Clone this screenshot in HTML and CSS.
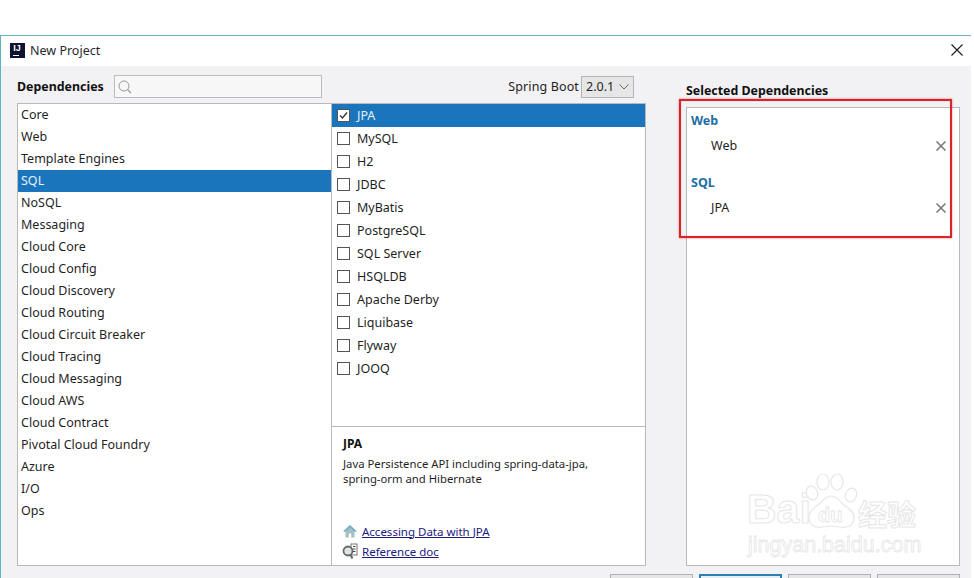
FILE: index.html
```html
<!DOCTYPE html>
<html lang="en">
<head>
<meta charset="utf-8">
<title>New Project</title>
<link rel="stylesheet" href="styles.css">
</head>
<body>
<div class="page">
  <div class="dialog">
    <div class="titlebar">
      <div class="ij"><span class="ij-text">IJ</span><span class="ij-bar"></span></div>
      <span class="title">New Project</span>
      <svg class="close" width="12" height="12" viewBox="0 0 12 12"><path d="M.5.5l11 11M11.500.5l-11 11" stroke="#1a1a1a" stroke-width="1.1" fill="none"/></svg>
    </div>
    <div class="content">
      <div class="main">
        <div class="toolbar">
          <span class="heading">Dependencies</span>
          <div class="search">
            <svg width="16" height="16" viewBox="0 0 16 16"><circle cx="7" cy="7" r="5" fill="none" stroke="#9a9a9a" stroke-width="1"/><path d="M10.500 10.500l3.500 3.500" stroke="#9a9a9a" stroke-width="1.300"/></svg>
          </div>
          <span class="boot-label">Spring Boot</span>
          <div class="combo"><span>2.0.1</span><svg width="10" height="6" viewBox="0 0 10 6"><path d="M.5.5L5 5 9.500.5" fill="none" stroke="#666" stroke-width="1"/></svg></div>
        </div>
        <div class="lists">
          <ul class="categories">
            <li>Core</li><li>Web</li><li>Template Engines</li><li class="selected">SQL</li><li>NoSQL</li><li>Messaging</li><li>Cloud Core</li><li>Cloud Config</li><li>Cloud Discovery</li><li>Cloud Routing</li><li>Cloud Circuit Breaker</li><li>Cloud Tracing</li><li>Cloud Messaging</li><li>Cloud AWS</li><li>Cloud Contract</li><li>Pivotal Cloud Foundry</li><li>Azure</li><li>I/O</li><li>Ops</li>
          </ul>
          <div class="detail">
            <ul class="options">
              <li class="selected"><span class="box"><svg width="11" height="11" viewBox="0 0 11 11"><path d="M2 5.500l2.500 2.500L9 2.500" fill="none" stroke="#333" stroke-width="1.300"/></svg></span>JPA</li>
              <li><span class="box"></span>MySQL</li>
              <li><span class="box"></span>H2</li>
              <li><span class="box"></span>JDBC</li>
              <li><span class="box"></span>MyBatis</li>
              <li><span class="box"></span>PostgreSQL</li>
              <li><span class="box"></span>SQL Server</li>
              <li><span class="box"></span>HSQLDB</li>
              <li><span class="box"></span>Apache Derby</li>
              <li><span class="box"></span>Liquibase</li>
              <li><span class="box"></span>Flyway</li>
              <li><span class="box"></span>JOOQ</li>
            </ul>
            <div class="info">
              <div class="info-title">JPA</div>
              <p class="info-text">Java Persistence API including spring-data-jpa,<br>spring-orm and Hibernate</p>
              <div class="info-links">
                <div class="link-row">
                  <svg class="link-icon" width="15" height="15" viewBox="0 0 15 15"><path d="M7.500 1.500L1 7.500h2v6h3.300V9.500h2.400v4H12v-6h2z" fill="#a9bfc6"/><path d="M7.500 1L.5 7.500h2.600L7.500 3.500l4.400 4h2.600z" fill="#6fb0c6"/></svg>
                  <a class="link">Accessing Data with JPA</a>
                </div>
                <div class="link-row">
                  <svg class="link-icon" width="16" height="16" viewBox="0 0 16 16"><rect x="9" y="1" width="6" height="11" fill="#fff" stroke="#777"/><path d="M11 3.500h2.500M11 6h2.500M11 8.500h2.500" stroke="#444"/><circle cx="6" cy="8" r="4.500" fill="#dfe6e8" stroke="#666" stroke-width="1.800"/><path d="M8.500 12L10.500 15.500" stroke="#666" stroke-width="2"/></svg>
                  <a class="link">Reference doc</a>
                </div>
              </div>
            </div>
          </div>
        </div>
      </div>
      <div class="side">
        <div class="heading side-heading">Selected Dependencies</div>
        <div class="panel">
          <div class="group">Web</div>
          <div class="item"><span>Web</span><svg width="10" height="10" viewBox="0 0 10 10"><path d="M.5.500l9 9M9.500.500l-9 9" stroke="#777" stroke-width="1.500"/></svg></div>
          <div class="group group-next">SQL</div>
          <div class="item"><span>JPA</span><svg width="10" height="10" viewBox="0 0 10 10"><path d="M.5.500l9 9M9.500.500l-9 9" stroke="#777" stroke-width="1.500"/></svg></div>
        </div>
      </div>
    </div>
    <div class="footer">
      <span class="btn"></span><span class="btn btn-default"></span><span class="btn"></span><span class="btn"></span>
    </div>
  </div>
  <div class="callout"></div>
  <div class="watermark">
    <span class="wm-bai">Bai</span>
    <span class="wm-paw">
      <svg width="52" height="56" viewBox="0 0 52 56"><g fill="#fff" stroke="#e6e6e6" stroke-width="1.200"><ellipse cx="17" cy="9" rx="6" ry="8"/><ellipse cx="31" cy="9" rx="6" ry="8"/><ellipse cx="6" cy="20" rx="5.500" ry="7" transform="rotate(-20 6 20)"/><ellipse cx="45" cy="22" rx="5.500" ry="7" transform="rotate(20 45 22)"/><path d="M25 23c-6 0-8 5-13 9-5 4-10 7-9 14 1 7 7 9 13 8 6-1 12-1 18 0 7 1 13-1 14-8 1-7-5-11-10-14-5-4-7-9-13-9z"/></g></svg>
      <span class="wm-du">du</span>
    </span>
    <span class="wm-cn">经验</span>
    <span class="wm-url">jingyan.baidu.com</span>
  </div>
</div>
</body>
</html>
```
FILE: styles.css
```css
* { box-sizing: border-box; }
html, body { margin: 0; padding: 0; background: #fff; }
body { font-family: "Noto Sans", "Open Sans", sans-serif; font-size: 13px; color: #1f1f1f; }
ul { list-style: none; margin: 0; padding: 0; }
p { margin: 0; }

.page { position: relative; width: 974px; height: 578px; overflow: hidden; padding-top: 35px; }
.dialog { width: 971px; height: 600px; border-top: 1px solid #6fb2c2; border-left: 1px solid #58b7c3; background: #f2f1f3; }

.titlebar { height: 30px; background: #fff; display: flex; align-items: center; padding: 0 8px 2px 9px; }
.ij { width: 15px; height: 15px; background: #0b1430; display: flex; flex-direction: column; align-items: center; margin-right: 5px; }
.ij-text { font: bold 9px/9px "Liberation Sans", sans-serif; color: #fff; margin-top: 1px; margin-right: 1px; }
.ij-bar { width: 6px; height: 1px; background: #fff; margin-top: 2px; margin-right: 3px; }
.title { font-size: 12.500px; color: #2a2a2a; flex: 1; }

.content { display: flex; padding-left: 16px; gap: 40px; }
.main { width: 629px; }
.toolbar { height: 37px; display: flex; align-items: center; padding-top: 4px; }
.heading { font-weight: 700; font-size: 12.400px; color: #111; }
.search { width: 208px; height: 23px; margin-left: 10px; border: 1px solid #bcbcbc; background: #f7f7f8; display: flex; align-items: center; padding-left: 2px; }
.boot-label { margin-left: auto; margin-right: 2px; font-size: 12.500px; letter-spacing: .01em; }
.combo { width: 53px; height: 22px; margin-right: 12px; border: 1px solid #b4b4b4; background: #e6e6e6; display: flex; align-items: center; justify-content: space-between; padding: 0 4px; font-size: 12.500px; }

.lists { display: flex; height: 463px; border: 1px solid #b9b9b9; background: #fff; }
.categories { width: 314px; border-right: 1px solid #b9b9b9; flex: none; }
.categories li { height: 22px; line-height: 22px; padding-left: 3px; font-size: 12.500px; }
.selected { background: #1b75bc; color: #e6f0f8; }
.detail { flex: 1; display: flex; flex-direction: column; min-width: 0; }
.options { height: 323px; border-bottom: 1px solid #b9b9b9; }
.options li { height: 23px; display: flex; align-items: center; padding-left: 5px; font-size: 12.500px; }
.box { width: 13px; height: 13px; border: 1px solid #555; background: #fff; margin-right: 7px; display: flex; align-items: center; justify-content: center; }
.info { flex: 1; display: flex; flex-direction: column; padding: 9px 10px 4px 11px; }
.info-title { font-weight: 700; font-size: 12px; line-height: 16px; color: #111; }
.info-text { font-size: 11.300px; line-height: 14.600px; margin-top: 5px; }
.info-links { margin-top: auto; margin-left: -1px; }
.link-row { height: 20px; display: flex; align-items: center; }
.link-icon { flex: none; width: 20px; padding-right: 4px; }
.link { color: #1b1b80; text-decoration: underline; font-size: 11.500px; }

.side { width: 274px; }
.side-heading { height: 41px; line-height: 50px; }
.panel { height: 459px; border: 1px solid #b9b9b9; background: #fff; padding-left: 4px; padding-right: 13px; }
.group { height: 25px; line-height: 25px; font-weight: 700; font-size: 12.500px; color: #1c6ea4; }
.group-next { margin-top: 12px; }
.item { height: 25px; display: flex; align-items: center; justify-content: space-between; padding-left: 20px; font-size: 12.500px; }

.footer { display: flex; justify-content: flex-end; gap: 6px; padding-right: 11px; margin-top: 8px; }
.btn { width: 83px; height: 24px; border: 1px solid #b0b0b0; background: #e6e6e6; }
.btn-default { border: 2px solid #2c7fb0; background: #e3eef5; }

.callout { position: absolute; left: 679px; top: 99px; width: 273px; height: 139px; border: 2px solid #d8252c; box-shadow: 0 0 2px rgba(216, 37, 44, .6), inset 0 0 1px rgba(216, 37, 44, .5); pointer-events: none; }

.watermark { position: absolute; left: 747px; top: 473px; width: 175px; height: 84px; pointer-events: none; color: #fff; -webkit-text-stroke: 1px #e6e6e6; }
.wm-bai { position: absolute; left: 0; top: 11px; font: 700 41px/50px "Liberation Sans", sans-serif; }
.wm-paw { position: absolute; left: 59px; top: 0; }
.wm-du { position: absolute; left: 12px; top: 30px; font: 700 20px/24px "Liberation Sans", sans-serif; -webkit-text-stroke: .8px #e6e6e6; }
.wm-cn { position: absolute; left: 111px; top: 22px; font: 700 29px/36px "Noto Sans CJK SC", sans-serif; }
.wm-url { position: absolute; left: 1px; top: 59px; font: 400 21.500px/26px "Liberation Sans", sans-serif; -webkit-text-stroke: .8px #e6e6e6; }
```
